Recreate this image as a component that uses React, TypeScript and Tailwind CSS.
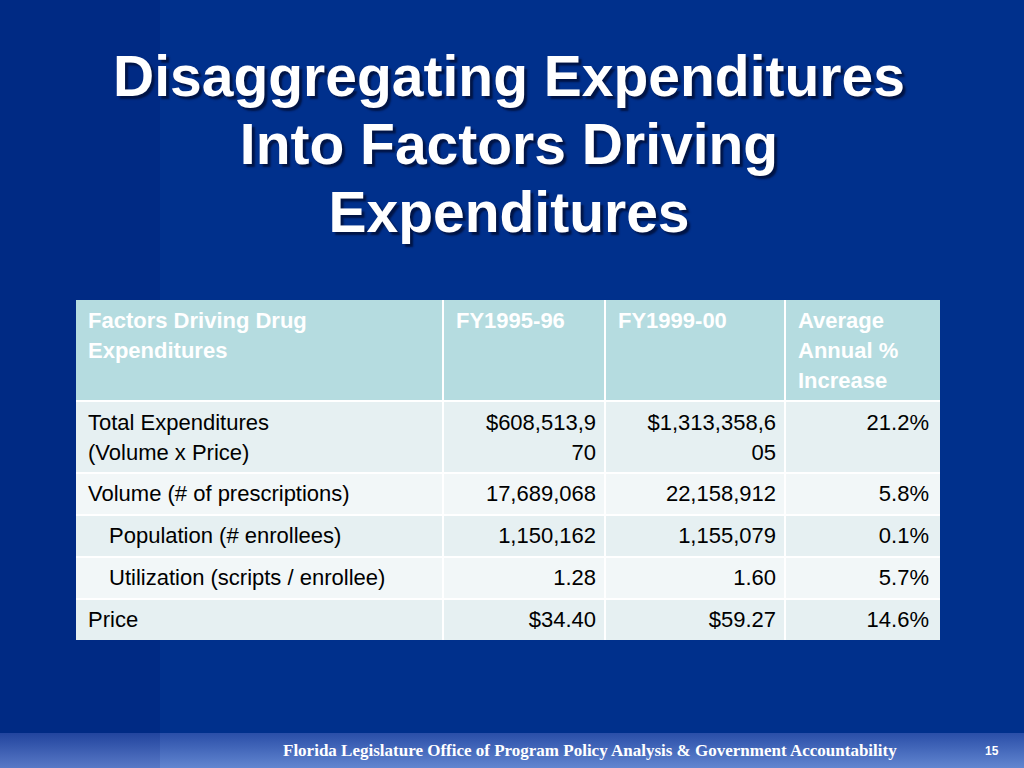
import React from "react";

const rows = [
    { label: ["Total Expenditures", "(Volume x Price)"], a: ["$608,513,9", "70"], b: ["$1,313,358,6", "05"], pct: "21.2%", indent: false, tall: true, shade: "dark" },
    { label: ["Volume (# of prescriptions)"], a: ["17,689,068"], b: ["22,158,912"], pct: "5.8%", indent: false, tall: false, shade: "light" },
    { label: ["Population (# enrollees)"], a: ["1,150,162"], b: ["1,155,079"], pct: "0.1%", indent: true, tall: false, shade: "dark" },
    { label: ["Utilization (scripts / enrollee)"], a: ["1.28"], b: ["1.60"], pct: "5.7%", indent: true, tall: false, shade: "light" },
    { label: ["Price"], a: ["$34.40"], b: ["$59.27"], pct: "14.6%", indent: false, tall: false, shade: "dark" },
]

function Lines({ lines }: { lines: string[] }) {
    return <>{lines.map((l, i) => <div key={i}>{l}</div>)}</>
}

export default function App() {
    return (
        <div className="w-[1024px] h-[768px] flex flex-col overflow-hidden bg-[linear-gradient(to_right,#002a84_160px,#00308c_160px)] font-['Liberation_Sans',Arial,sans-serif]">
            <div className="flex-1 flex flex-col items-center">
                <h1 className="mt-[42px] mr-[6px] text-center text-white font-bold text-[57px] leading-[68px] [text-shadow:3px_3px_2px_#001445] whitespace-nowrap">
                    <div>Disaggregating Expenditures</div>
                    <div>Into Factors Driving</div>
                    <div>Expenditures</div>
                </h1>

                {/* table */}
                <div className="mt-[54px] mr-[8px] grid grid-cols-[366px_160px_178px_154px] gap-[2px] bg-white text-[22px] leading-[30px]">
                    <div className="bg-[#b5dce0] text-white font-bold pl-3 pt-[6px] h-[100px]">Factors Driving Drug<br />Expenditures</div>
                    <div className="bg-[#b5dce0] text-white font-bold pl-3 pt-[6px]">FY1995-96</div>
                    <div className="bg-[#b5dce0] text-white font-bold pl-3 pt-[6px]">FY1999-00</div>
                    <div className="bg-[#b5dce0] text-white font-bold pl-3 pt-[6px]">Average<br />Annual %<br />Increase</div>
                    {rows.map((r, i) => {
                        const bg = r.shade === "dark" ? "bg-[#e6f0f2]" : "bg-[#f2f7f8]"
                        const h = r.tall ? "h-[70px] pt-[6px]" : "h-[40px] pt-[5px]"
                        return (
                            <React.Fragment key={i}>
                                <div className={`${bg} ${h} ${r.indent ? "pl-[33px]" : "pl-3"} text-black whitespace-nowrap`}><Lines lines={r.label} /></div>
                                <div className={`${bg} ${h} pr-[8px] text-right text-black`}><Lines lines={r.a} /></div>
                                <div className={`${bg} ${h} pr-[8px] text-right text-black`}><Lines lines={r.b} /></div>
                                <div className={`${bg} ${h} pr-[11px] text-right text-black`}>{r.pct}</div>
                            </React.Fragment>
                        )
                    })}
                </div>
            </div>

            {/* footer */}
            <div className="h-[35px] flex">
                <div className="w-[160px] bg-[linear-gradient(to_bottom,#22449e,#5879c6)]" />
                <div className="flex-1 flex items-center bg-[linear-gradient(to_bottom,#2a4ea8,#6286d0)]">
                    <div className="ml-[123px] w-[614px] text-white font-bold text-[17px] font-['Liberation_Serif','Times_New_Roman',serif] whitespace-nowrap">
                        Florida Legislature Office of Program Policy Analysis &amp; Government Accountability
                    </div>
                    <div className="ml-[88px] text-white font-bold text-[12px]">15</div>
                </div>
            </div>
        </div>
    )
}
